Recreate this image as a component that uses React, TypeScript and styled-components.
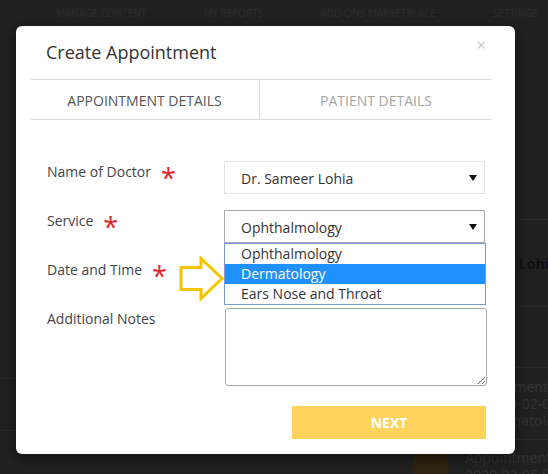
import React from "react";
import styled, { createGlobalStyle } from "styled-components";

const Global = createGlobalStyle`
  html, body { margin: 0; padding: 0; background: #212121; }
  body { font-family: "Open Sans", "Liberation Sans", sans-serif; }
  * { box-sizing: border-box; }
`;

const Page = styled.div`
  position: relative;
  width: 548px;
  height: 474px;
  overflow: hidden;
  background: #212121;
  display: flex;
  flex-direction: column;
`;

const Nav = styled.nav`
  height: 26px;
  flex: none;
  display: flex;
  justify-content: flex-end;
  align-items: center;
  gap: 57px;
  padding-right: 10px;
  white-space: nowrap;
  overflow: hidden;
`;

const NavItem = styled.span`
  font-size: 10px;
  color: #2c2c2c;
  text-transform: uppercase;
`;

const Main = styled.div`
  flex: 1;
  display: grid;
  grid-template-columns: 395px 1fr;
  min-height: 0;
`;

const LeftPane = styled.div`
  display: flex;
  flex-direction: column;
  padding-top: 326px;
`;

const LeftRow = styled.div<{ $h: number }>`
  height: ${(p) => p.$h}px;
  border-bottom: 1px solid #2a2a2a;
`;

const Feed = styled.div`
  display: flex;
  flex-direction: column;
  padding-top: 193px;
  width: 320px;
`;

const FeedRow = styled.div<{ $h: number; $top?: boolean }>`
  height: ${(p) => p.$h}px;
  border-top: 1px solid #2a2a2a;
  display: flex;
  align-items: ${(p) => (p.$top ? "flex-start" : "center")};
  padding-top: ${(p) => (p.$top ? "9px" : "0")};
  gap: 16px;
  padding-left: 17px;
`;

const FeedText = styled.div<{ $bold?: boolean; $indent?: number }>`
  font-size: 14px;
  line-height: 17px;
  color: ${(p) => (p.$bold ? "#0f0f0f" : "#333")};
  font-weight: ${(p) => (p.$bold ? 700 : 400)};
  padding-left: ${(p) => p.$indent ?? 0}px;
  white-space: nowrap;
`;

const Avatar = styled.div`
  width: 37px;
  height: 37px;
  border-radius: 50%;
  background: #2e2410;
  flex: none;
`;

const Modal = styled.div`
  position: absolute;
  left: 16px;
  top: 26px;
  width: 499px;
  height: 428px;
  background: #fff;
  border-radius: 6px;
  box-shadow: 0 3px 14px rgba(0, 0, 0, 0.55);
  display: flex;
  flex-direction: column;
`;

const Header = styled.div`
  height: 54px;
  display: flex;
  justify-content: space-between;
  align-items: center;
  padding: 0 29px 0 30px;
`;

const Title = styled.h4`
  margin: 0;
  font-size: 18px;
  font-weight: 400;
  color: #333;
`;

const Close = styled.span`
  align-self: flex-start;
  margin-top: 10px;
  font-size: 17px;
  line-height: 1;
  color: #c9c9c9;
`;

const Tabs = styled.div`
  margin: 0 23px 0 14px;
  height: 42px;
  border-top: 1px solid #ddd;
  border-bottom: 1px solid #ddd;
  display: grid;
  grid-template-columns: 230px 1fr;
`;

const Tab = styled.div<{ $active?: boolean }>`
  display: flex;
  align-items: center;
  justify-content: center;
  padding-top: 2px;
  font-size: 14px;
  text-transform: uppercase;
  color: ${(p) => (p.$active ? "#555" : "#a5a5a5")};
  border-right: ${(p) => (p.$active ? "1px solid #ddd" : "none")};
`;

const Form = styled.div`
  display: grid;
  grid-template-columns: 177px 261px;
  row-gap: 16px;
  padding: 41px 30px 15px 31px;
`;

const Label = styled.div`
  display: flex;
  align-items: flex-start;
  gap: 10px;
  font-size: 14px;
  line-height: 22px;
  color: #444;
`;

const Star = styled.span`
  color: #e5252c;
  font-size: 27px;
  line-height: 22px;
  height: 22px;
  display: inline-block;
  transform: translateY(6px);
`;

const SelectWrap = styled.div`
  position: relative;
`;

const SelectBox = styled.div<{ $active?: boolean }>`
  height: 33px;
  border: 1px solid ${(p) => (p.$active ? "#a9a9a9" : "#e3e3e3")};
  display: flex;
  align-items: center;
  justify-content: space-between;
  padding: 1px 7px 0 16px;
  font-size: 14px;
  color: #333;
  background: #fff;
`;

const Caret = styled.svg`
  width: 8px;
  height: 6px;
`;

const OptionList = styled.div`
  position: absolute;
  left: 0;
  top: 100%;
  width: 262px;
  border: 1px solid #7d9bd3;
  background: #fff;
  display: flex;
  flex-direction: column;
  z-index: 2;
`;

const Option = styled.div<{ $hl?: boolean }>`
  height: 20px;
  line-height: 20px;
  padding-left: 16px;
  font-size: 14px;
  color: ${(p) => (p.$hl ? "#fff" : "#333")};
  background: ${(p) => (p.$hl ? "#1e90ff" : "#fff")};
`;

const Notes = styled.textarea`
  height: 78px;
  width: 262px;
  margin-left: 1px;
  border: 1px solid #a9a9a9;
  border-radius: 3px;
  font-family: inherit;
  display: block;
`;

const Next = styled.button`
  grid-column: 2;
  justify-self: end;
  margin-top: 4px;
  margin-right: -1px;
  width: 194px;
  height: 33px;
  border: none;
  background: #ffd35c;
  color: #fff;
  font-family: inherit;
  font-weight: 700;
  font-size: 14px;
`;

const Pointer = styled.svg`
  position: absolute;
  left: 178px;
  top: 256px;
  width: 48px;
  height: 45px;
  z-index: 3;
`;

const Chevron = () => (
  <Caret viewBox="0 0 8 6">
    <path d="M0 0 L8 0 L4 6 Z" fill="#111" />
  </Caret>
);

export default function App() {
  return (
    <>
      <Global />
      <Page>
        <Nav>
          <NavItem>Appointments</NavItem>
          <NavItem>Manage Content</NavItem>
          <NavItem>My Reports</NavItem>
          <NavItem>Add-ons Marketplace</NavItem>
          <NavItem>Settings</NavItem>
        </Nav>
        <Main>
          <LeftPane>
            <LeftRow $h={27} />
            <LeftRow $h={52} />
          </LeftPane>
          <Feed>
            <FeedRow $h={87}>
              <FeedText $bold $indent={26}>
                Dr. Sameer Lohia
              </FeedText>
            </FeedRow>
            <FeedRow $h={61} />
            <FeedRow $h={72}>
              <FeedText $indent={50}>
                Appointment Booked
                <br />
                On 2020-02-01 from
                <br />
                for Dermatology
              </FeedText>
            </FeedRow>
            <FeedRow $h={60} $top>
              <Avatar />
              <FeedText>
                Appointment Booked
                <br />
                2020-02-05 from
              </FeedText>
            </FeedRow>
          </Feed>
        </Main>

        <Modal>
          <Header>
            <Title>Create Appointment</Title>
            <Close>×</Close>
          </Header>
          <Tabs>
            <Tab $active>Appointment Details</Tab>
            <Tab>Patient Details</Tab>
          </Tabs>
          <Form>
            <Label>
              Name of Doctor <Star>*</Star>
            </Label>
            <SelectWrap>
              <SelectBox>
                Dr. Sameer Lohia
                <Chevron />
              </SelectBox>
            </SelectWrap>

            <Label>
              Service <Star>*</Star>
            </Label>
            <SelectWrap>
              <SelectBox $active>
                Ophthalmology
                <Chevron />
              </SelectBox>
              <OptionList>
                <Option>Ophthalmology</Option>
                <Option $hl>Dermatology</Option>
                <Option>Ears Nose and Throat</Option>
              </OptionList>
            </SelectWrap>

            <Label>
              Date and Time <Star>*</Star>
            </Label>
            <SelectWrap>
              <SelectBox />
            </SelectWrap>

            <Label>Additional Notes</Label>
            <Notes />

            <Next>NEXT</Next>
          </Form>
        </Modal>

        <Pointer viewBox="0 0 48 45">
          <path
            d="M3 11.5 L23 11.5 L23 2.5 L44 22.5 L23 42.5 L23 33.5 L3 33.5 Z"
            fill="none"
            stroke="#f8c300"
            strokeWidth="3"
            strokeLinejoin="miter"
          />
        </Pointer>
      </Page>
    </>
  );
}
